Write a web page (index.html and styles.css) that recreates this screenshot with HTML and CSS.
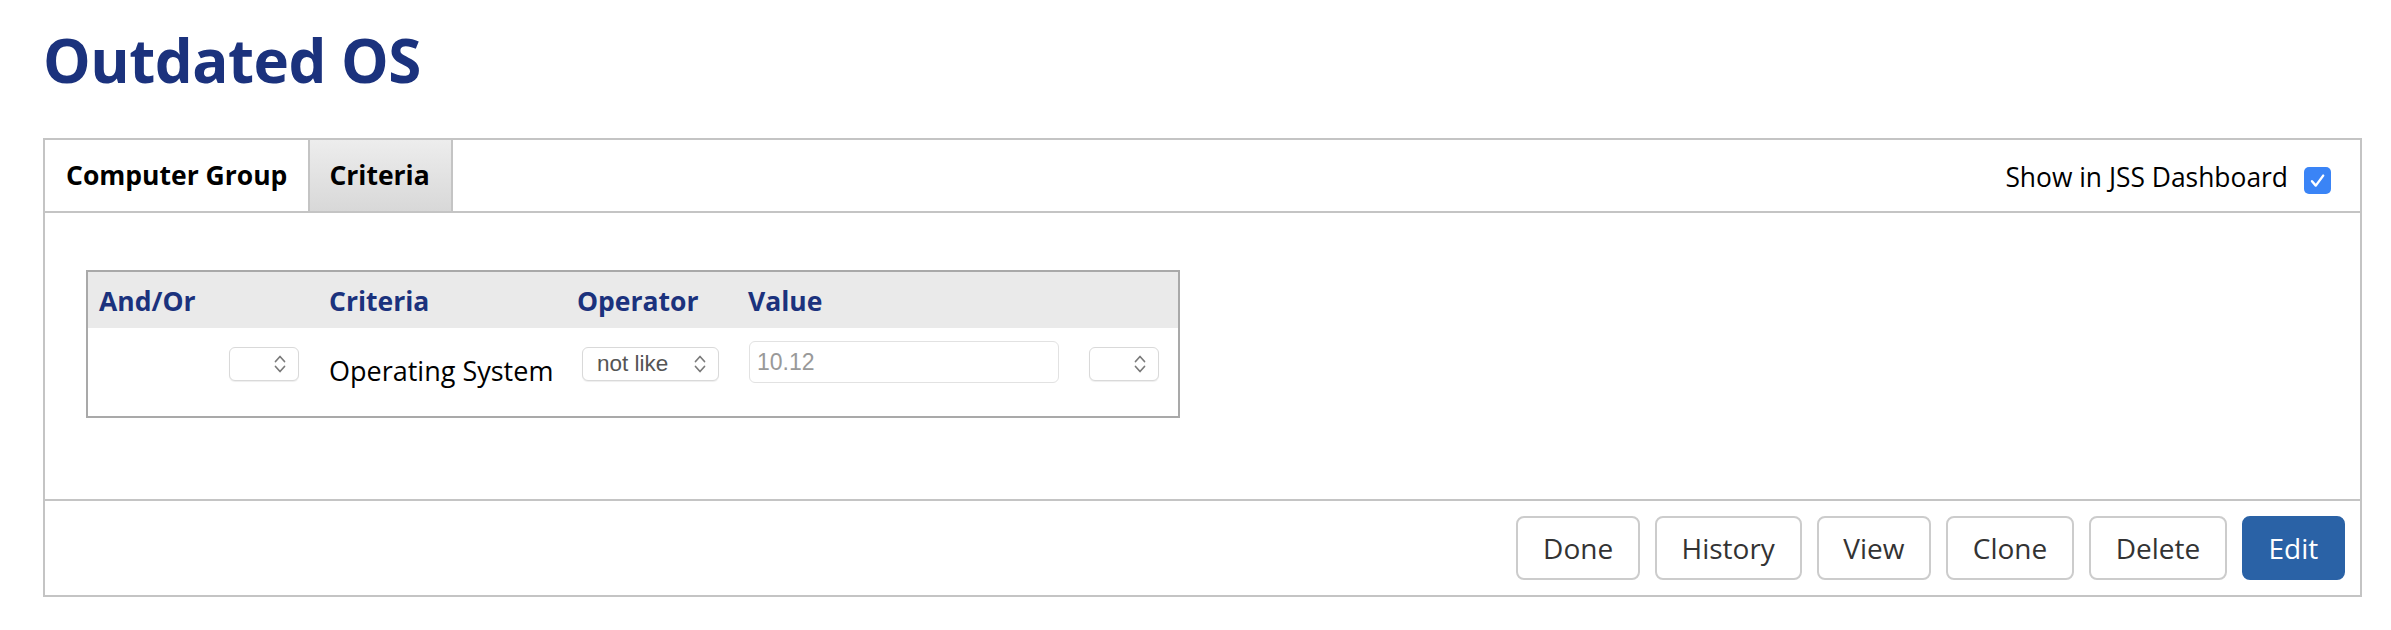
FILE: index.html
```html
<!DOCTYPE html>
<html>
<head>
<meta charset="utf-8">
<link rel="stylesheet" href="styles.css">
</head>
<body>
<div class="page">
  <h1 class="title">Outdated OS</h1>
  <div class="panel">
    <div class="tabs">
      <div class="tab">Computer Group</div>
      <div class="tab tab-active">Criteria</div>
      <div class="dash">
        <span class="dash-label">Show in JSS Dashboard</span>
        <span class="checkbox">
          <svg width="27" height="27" viewBox="0 0 27 27"><path d="M8 14.2 L11.8 18.6 L19.2 8.6" fill="none" stroke="#fff" stroke-width="2.4" stroke-linecap="round" stroke-linejoin="round"/></svg>
        </span>
      </div>
    </div>
    <div class="body">
      <div class="crit">
        <div class="crit-head">
          <div class="hcell">And/Or</div>
          <div class="hcell">Criteria</div>
          <div class="hcell">Operator</div>
          <div class="hcell">Value</div>
          <div class="hcell"></div>
        </div>
        <div class="crit-row">
          <div class="cell cell-andor">
            <div class="select select-small">
              <span class="select-text"></span>
              <svg class="chev" width="12" height="20" viewBox="0 0 12 20"><path d="M1.5 7.5 L6 2.5 L10.5 7.5 M1.5 12.5 L6 17.5 L10.5 12.5" fill="none" stroke="#7a7a7a" stroke-width="1.7" stroke-linecap="round" stroke-linejoin="round"/></svg>
            </div>
          </div>
          <div class="cell cell-text">Operating System</div>
          <div class="cell cell-op">
            <div class="select select-op">
              <span class="select-text">not like</span>
              <svg class="chev" width="12" height="20" viewBox="0 0 12 20"><path d="M1.5 7.5 L6 2.5 L10.5 7.5 M1.5 12.5 L6 17.5 L10.5 12.5" fill="none" stroke="#7a7a7a" stroke-width="1.7" stroke-linecap="round" stroke-linejoin="round"/></svg>
            </div>
          </div>
          <div class="cell cell-val">
            <div class="input">10.12</div>
          </div>
          <div class="cell cell-last">
            <div class="select select-small">
              <span class="select-text"></span>
              <svg class="chev" width="12" height="20" viewBox="0 0 12 20"><path d="M1.5 7.5 L6 2.5 L10.5 7.5 M1.5 12.5 L6 17.5 L10.5 12.5" fill="none" stroke="#7a7a7a" stroke-width="1.7" stroke-linecap="round" stroke-linejoin="round"/></svg>
            </div>
          </div>
        </div>
      </div>
    </div>
    <div class="footer">
      <button class="btn">Done</button>
      <button class="btn">History</button>
      <button class="btn">View</button>
      <button class="btn">Clone</button>
      <button class="btn">Delete</button>
      <button class="btn btn-primary">Edit</button>
    </div>
  </div>
</div>
</body>
</html>
```

FILE: styles.css
```css
html, body {
  margin: 0;
  padding: 0;
  background: #fff;
}
body {
  font-family: "Open Sans", "Noto Sans", sans-serif;
  color: #000;
}
.page {
  padding: 20px 29px 0 43px;
}
.title {
  margin: 0 0 38px 0;
  font-size: 60px;
  line-height: 80px;
  font-weight: 700;
  color: #1b327d;
  letter-spacing: -0.5px;
}
.panel {
  border: 2px solid #c4c4c4;
}
.tabs {
  display: flex;
  height: 71px;
  border-bottom: 2px solid #c4c4c4;
}
.tab {
  padding: 0 21px;
  font-size: 26.5px;
  font-weight: 700;
  line-height: 71px;
  border-right: 2px solid #c4c4c4;
}
.tab-active {
  background: linear-gradient(#ededed, #d8d8d8);
  padding: 0 21px 0 19px;
}
.dash {
  margin-left: auto;
  margin-top: 20px;
  margin-right: 29px;
  align-self: flex-start;
  display: flex;
  align-items: flex-end;
  gap: 16px;
}
.dash-label {
  font-size: 26.4px;
  line-height: 34px;
}
.checkbox {
  width: 27px;
  height: 27px;
  border-radius: 5px;
  background: #3a84f6;
  display: block;
}
.checkbox svg {
  display: block;
}
.body {
  padding: 57px 0 81px 41px;
}
.crit {
  width: 1090px;
  border: 2px solid #a9a9a9;
}
.crit-head, .crit-row {
  display: grid;
  grid-template-columns: 230px 248px 171px 341px 1fr;
}
.crit-head {
  height: 56px;
  background: #eaeaea;
}
.hcell {
  padding: 2px 0 0 11px;
  line-height: 54px;
  font-size: 26.5px;
  font-weight: 700;
  color: #1b327d;
}
.crit-row {
  height: 88px;
  align-items: start;
}
.cell-andor {
  display: flex;
  justify-content: flex-end;
  padding: 19px 19px 0 0;
}
.cell-text {
  padding: 26px 0 0 11px;
  font-size: 27px;
  line-height: 34px;
}
.cell-op {
  padding: 19px 0 0 16px;
}
.cell-val {
  padding: 13px 0 0 12px;
}
.cell-last {
  padding: 19px 0 0 11px;
}
.select {
  box-sizing: border-box;
  height: 34px;
  border: 1px solid #d9d9d9;
  border-radius: 6px;
  background: #fff;
  box-shadow: 0 1px 1px rgba(0, 0, 0, 0.07);
  display: flex;
  align-items: center;
  justify-content: space-between;
  padding: 0 12px 0 14px;
}
.select-small {
  width: 70px;
}
.select-op {
  width: 137px;
}
.select-text {
  font-family: "Liberation Sans", Arial, sans-serif;
  font-size: 22.5px;
  color: #555;
}
.chev {
  display: block;
}
.input {
  box-sizing: border-box;
  width: 310px;
  height: 42px;
  border: 1px solid #e2e2e2;
  border-radius: 6px;
  padding: 0 0 0 7px;
  font-family: "Liberation Sans", Arial, sans-serif;
  font-size: 23px;
  line-height: 40px;
  color: #999;
}
.footer {
  border-top: 2px solid #c4c4c4;
  display: flex;
  justify-content: flex-end;
  gap: 15px;
  padding: 15px;
}
.btn {
  box-sizing: border-box;
  height: 64px;
  padding: 0 24.7px;
  border: 2px solid #cccccc;
  border-radius: 8px;
  background: #fff;
  font-family: "Open Sans", "Noto Sans", sans-serif;
  font-size: 28px;
  line-height: 60px;
  color: #333;
}
.btn-primary {
  background: #2a62a6;
  border-color: #2a62a6;
  color: #fff;
}
```
